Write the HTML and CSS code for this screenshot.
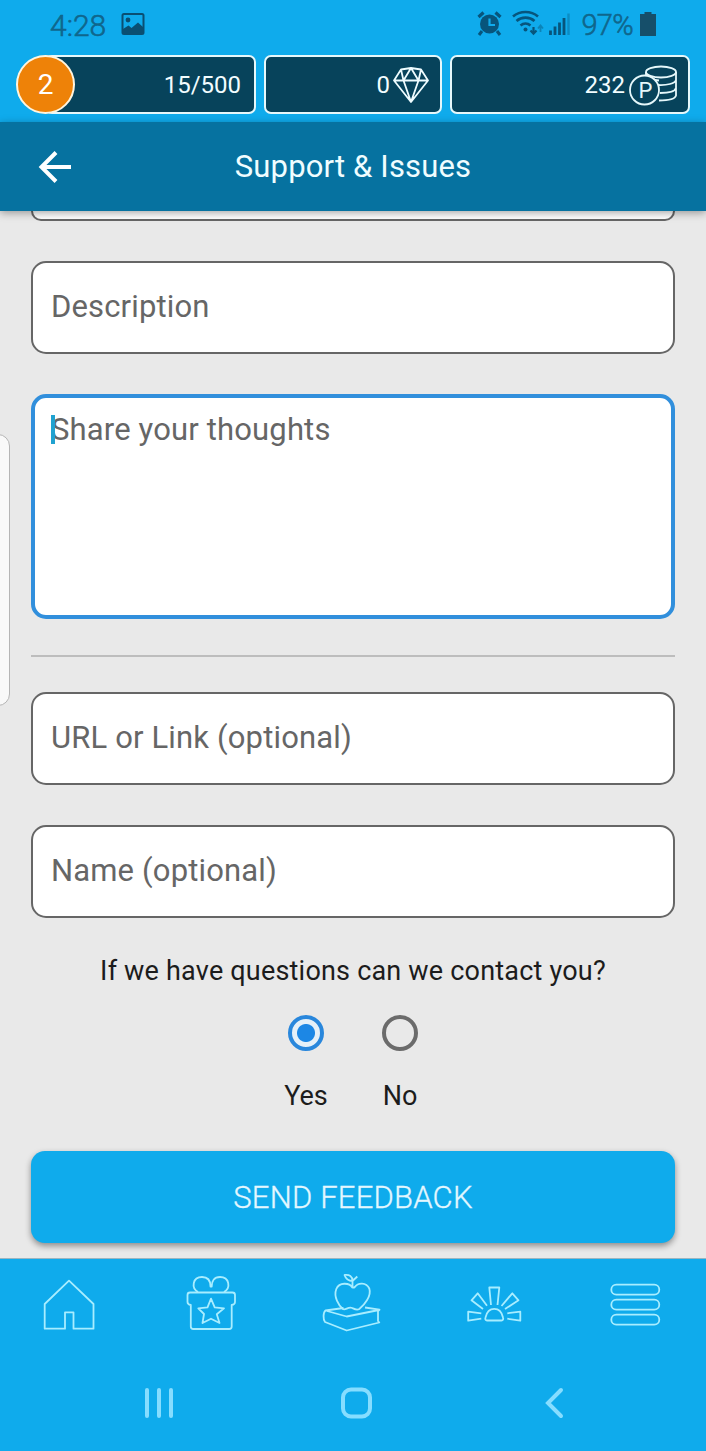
FILE: index.html
```html
<!DOCTYPE html>
<html lang="en">
<head>
    <meta charset="UTF-8">
    <meta name="viewport" content="width=device-width, initial-scale=1.0">
    <title>Support &amp; Issues</title>
    <link rel="stylesheet" href="styles.css">
</head>
<body>
    <div class="app">
        <!-- Status bar -->
        <div class="status-bar">
            <span class="clock">4:28</span>
            <svg class="photo" width="24" height="24" viewBox="0 0 24 24">
                <rect x="1.5" y="2" width="21" height="20" rx="1.5" fill="none" stroke="#0a4f72" stroke-width="2"/>
                <circle cx="7" cy="8" r="2.4" fill="#0a4f72"/>
                <path d="M2 17l5.500-3.500 3 2.500 6.500-5.500 5.500 5v6.500H2z" fill="#0a4f72"/>
            </svg>
            <svg class="status-icons" width="96" height="28" viewBox="0 0 96 28">
                <circle cx="12.5" cy="14" r="9.5" fill="#07557c"/>
                <path d="M5 21l-3 4M20 21l3 4" stroke="#07557c" stroke-width="3"/>
                <path d="M1.5 7l5-4.500M23.500 7l-5-4.500" stroke="#07557c" stroke-width="3.200"/>
                <path d="M12.500 8.500v6.500h5.500" fill="none" stroke="#10abec" stroke-width="2.200"/>
                <g fill="none" stroke="#07557c" stroke-width="2.600">
                    <path d="M36 6.500c7-6 18-6 25 0M39.500 11c5-4.500 13-4.500 18 0M43.500 15.500c3-2.500 7-2.500 10 0"/>
                </g>
                <circle cx="48.500" cy="19.500" r="2" fill="#07557c"/>
                <path d="M56.500 17v6M53.500 20.500l3 3.200 3-3.200" fill="none" stroke="#07557c" stroke-width="2.200"/>
                <path d="M63.500 22v-6M61 18.500l2.500-3 2.500 3" fill="none" stroke="#0b84b8" stroke-width="1.800"/>
                <path d="M73.500 25v-4.500M78 25v-8.500M82.500 25v-12.500M87 25v-17" stroke="#07557c" stroke-width="2.800"/>
                <path d="M91.500 25v-21.500" stroke="#0c8cc3" stroke-width="2.400"/>
            </svg>
            <span class="percent">97%</span>
            <svg class="battery" width="16" height="24" viewBox="0 0 16 24">
                <path d="M4.500 0h7v2H16v22H0V2h4.500z" fill="#164f6a"/>
            </svg>
        </div>

        <!-- Points -->
        <div class="stats">
            <div class="stat level">
                <span class="level-badge">2</span>
                <span class="stat-value">15/500</span>
            </div>
            <div class="stat gems">
                <span class="stat-value">0</span>
                <svg width="36" height="36" viewBox="0 0 36 36" fill="none" stroke="#eefcff" stroke-width="1.800" stroke-linejoin="round">
                    <path d="M8 2.500L18 1l10 1.500L35 13.500 18 35 1 13.500zM1 13.500h34M8 2.500l2.500 11L18 35l7.500-21.500L28 2.500M10.500 13.500L18 1l7.500 12.500"/>
                </svg>
            </div>
            <div class="stat coins">
                <span class="stat-value">232</span>
                <svg width="48" height="40" viewBox="0 0 48 40" fill="none" stroke="#e6f8fb" stroke-width="1.800">
                    <ellipse cx="32" cy="7" rx="15" ry="5.500"/>
                    <path d="M17 7v6M47 7v23.500c-1 3.500-8 5-17 5M17 11c4 3 8 4 13 4.500M47 15c-1 3.500-9 5.500-18 5M47 23c-1 3.500-8 5-16 5"/>
                    <circle cx="15.500" cy="25" r="14.500" fill="#07435b"/>
                    <text x="16.500" y="33" text-anchor="middle" class="coin-letter">P</text>
                </svg>
            </div>
        </div>

        <!-- Title bar -->
        <header class="title-bar">
            <svg class="back" width="34" height="34" viewBox="0 0 34 34" fill="none" stroke="#fff" stroke-width="4">
                <path d="M33 17H4M18 2.500L3.500 17 18 31.500"/>
            </svg>
            <h1>Support &amp; Issues</h1>
        </header>

        <!-- Feedback form -->
        <main class="form">
            <div class="field-end"></div>
            <div class="field">Description</div>
            <div class="field area"><span class="caret"></span>Share your thoughts</div>
            <hr>
            <div class="field">URL or Link (optional)</div>
            <div class="field">Name (optional)</div>
            <p class="question">If we have questions can we contact you?</p>
            <div class="choices">
                <label class="choice"><input type="radio" name="contact" checked><span>Yes</span></label>
                <label class="choice"><input type="radio" name="contact"><span>No</span></label>
            </div>
            <button class="send">SEND FEEDBACK</button>
            <div class="edge-panel"></div>
        </main>

        <!-- App navigation -->
        <nav class="tabs">
            <svg viewBox="0 0 60 60">
                <path d="M5.700 48.700V24L30 .7 54.500 24v24.700h-20V32.300h-8.500v16.400z"/>
            </svg>
            <svg viewBox="0 0 60 60">
                <path d="M17 12C10 8 11.500-3 21-3c6 0 8.500 4 8.500 9.500h1.200C30.700 1 33-3 39-3c9.500 0 11 11 4 15"/>
                <path d="M9 12.500h42.500q2.500 0 2.500 2.500v7q0 2.500-3.300 3v21.500q0 2.500-2.500 2.500H12.300q-2.500 0-2.500-2.500V25Q6.500 24.500 6.500 22v-7q0-2.500 2.500-2.500z"/>
                <path d="M30 18.700l3.700 8.600 9.300 1-7.200 6 2.700 8.700-8.500-4.300-8.500 4.300 1.500-9-5.700-5.700 9.200-1z"/>
            </svg>
            <svg viewBox="0 0 60 60">
                <path d="M20.500 28L2.500 30.500c-2.500 2-2.500 9-.5 11.500l21.700 8.500 32.600-8L55 41V31l1.500-1.300L42 27.500M4 31l19.700 5.500 32.300-6.500"/>
                <path d="M29.300 7.500c-3-5-13-5.500-16 1.500-3 8 2.500 16.500 6.500 20 3 1.500 5-2.500 9.500-1 3 1.500 4.500 2.500 7 1 5-4 12.500-13 10-20.500-3-6.500-11.500-6-14.500-1.500q-1 1-2.500.5zM29.500 7V1c-4.500 0-7-3-8-6 5-.5 8 1 8 6l4.800-4.500"/>
            </svg>
            <svg viewBox="0 0 60 60">
                <path d="M22 40.500c-1.500 0-2-1.500-1.500-3 2.500-11.500 15-11.500 17.500 0 .5 1.500 0 3-1.500 3zM26 25L24.300 7.500h10L32.500 25M18 29L6.500 20.300l6.200-7L22 25.700M40 29l13.500-8.700-6.200-7L36.500 26M16.300 33.300L3.200 31.700v9l13.100-2M42.300 33.300l13-1.600v9l-13-2"/>
            </svg>
            <svg viewBox="0 0 60 60">
                <rect x="4.300" y="4.700" width="48" height="10" rx="5"/>
                <rect x="4.300" y="19.700" width="48" height="10" rx="5"/>
                <rect x="4.300" y="34.700" width="48" height="10" rx="5"/>
            </svg>
        </nav>

        <!-- Phone navigation -->
        <div class="phone-nav">
            <svg width="36" height="36" viewBox="0 0 36 36">
                <path d="M6 5v26M18 5v26M30 5v26"/>
            </svg>
            <svg width="36" height="36" viewBox="0 0 36 36">
                <rect x="4" y="4.500" width="27" height="27" rx="8"/>
            </svg>
            <svg width="36" height="36" viewBox="0 0 36 36">
                <path d="M24 5L11 18l13 13"/>
            </svg>
        </div>
    </div>
</body>
</html>
```
FILE: styles.css
```css
* { box-sizing: border-box; }
body { margin: 0; font-family: Roboto, "Liberation Sans", sans-serif; background: #0fabec; }
svg { display: block; flex: none; overflow: visible; }
.app { width: 706px; height: 1451px; display: flex; flex-direction: column; overflow: hidden; }

.status-bar { height: 50px; padding: 0 50px; display: flex; align-items: center; color: #0f668c; font-size: 30px; }
.photo { margin-left: 15px; margin-top: -3px; }
.status-icons { margin-left: auto; margin-top: -3px; }
.percent { margin-left: 8px; font-size: 29px; letter-spacing: -0.7px; }
.battery { margin-left: 7px; margin-top: -3px; }
.clock, .percent { font-weight: 300; -webkit-text-stroke: 0.6px #0f668c; }

.stats { height: 72px; padding: 5px 16px 8px; display: flex; gap: 8px; }
.stat { position: relative; height: 59px; display: flex; align-items: center; justify-content: flex-end; background: #07435b; border: 2px solid #e6f8fb; border-radius: 7px; }
.stat-value { color: #f2fdff; font-size: 24px; line-height: 30px; }
.level { width: 211px; margin-left: 29px; padding-right: 13px; }
.gems { width: 178px; padding-right: 11px; gap: 3px; }
.coins { width: 240px; padding-right: 11px; gap: 4px; }
.level-badge { position: absolute; left: -31px; top: -2px; width: 59px; height: 59px; border: 2px solid #fff5df; border-radius: 50%; background: #ee8208; color: #fff; font-size: 28px; line-height: 56px; text-align: center; }
.coin-letter { fill: #e6f8fb; stroke: none; font-size: 22px; }

.title-bar { position: relative; z-index: 1; flex: none; height: 89px; padding: 0 38px; display: flex; align-items: center; background: #0672a0; box-shadow: 0 2px 8px rgba(0, 0, 0, 0.35); }
.title-bar h1 { flex: 1; margin: 0 34px 0 0; color: #f0fdff; font-size: 31px; font-weight: 400; letter-spacing: 0.15px; text-align: center; }

.form { position: relative; flex: none; height: 1048px; padding: 0 31px; background: #e9e9e9; border-bottom: 1px solid #9bb5c0; }
.field-end { height: 10px; background: #fff; border: 2px solid #666; border-top: 0; border-radius: 0 0 15px 15px; }
.field { position: relative; height: 93px; margin-top: 40px; padding: 0 18px; border: 2px solid #666; border-radius: 15px; background: #fff; color: #666; font-size: 31px; line-height: 87px; letter-spacing: 0.15px; }
.area { height: 225px; padding: 12px 16px; border: 4px solid #318fdc; line-height: 40px; }
.caret { position: absolute; left: 16px; top: 17px; width: 4px; height: 29px; background: #20a2d0; }
.form hr { height: 2px; margin: 36px 0 0; border: 0; background: #bdbdbd; }
hr + .field { margin-top: 35px; }
.question { margin: 35px 0 0; color: #1c1c1c; font-size: 27px; line-height: 36px; letter-spacing: 0.2px; text-align: center; }
.choices { margin-top: 26px; display: flex; justify-content: center; gap: 34px; }
.choice { width: 60px; display: flex; flex-direction: column; align-items: center; gap: 27px; color: #1c1c1c; font-size: 27px; line-height: 36px; }
.choice input { appearance: none; width: 36px; height: 36px; margin: 0; border: 4px solid #6b6b6b; border-radius: 50%; }
.choice input:checked { border-color: #2987dc; background: radial-gradient(circle, #1c87e5 8.5px, #e5f0f8 9.5px); }
.send { display: block; width: 100%; height: 92px; margin-top: 37px; padding: 0; border: 0; border-radius: 14px; background: #0fabec; box-shadow: 0 3px 6px rgba(0, 0, 0, 0.4); color: #e3f7ff; font-family: inherit; font-size: 31px; font-weight: 300; letter-spacing: 0.2px; -webkit-text-stroke: 0.3px #e3f7ff; }
.edge-panel { position: absolute; left: -16px; top: 223px; width: 26px; height: 272px; border: 1px solid #b5b5b5; border-radius: 12px; background: #f9f9f9; }

.tabs { height: 96px; padding: 21px 39px 0; display: flex; justify-content: space-between; }
.tabs svg { width: 60px; height: 60px; fill: none; stroke: #a8edff; stroke-width: 1.8; stroke-linejoin: round; }
.phone-nav { height: 96px; padding: 30px 133px 0 141px; display: flex; justify-content: space-between; }
.phone-nav svg { fill: none; stroke: #86ddff; stroke-width: 4; stroke-linecap: round; }
```
